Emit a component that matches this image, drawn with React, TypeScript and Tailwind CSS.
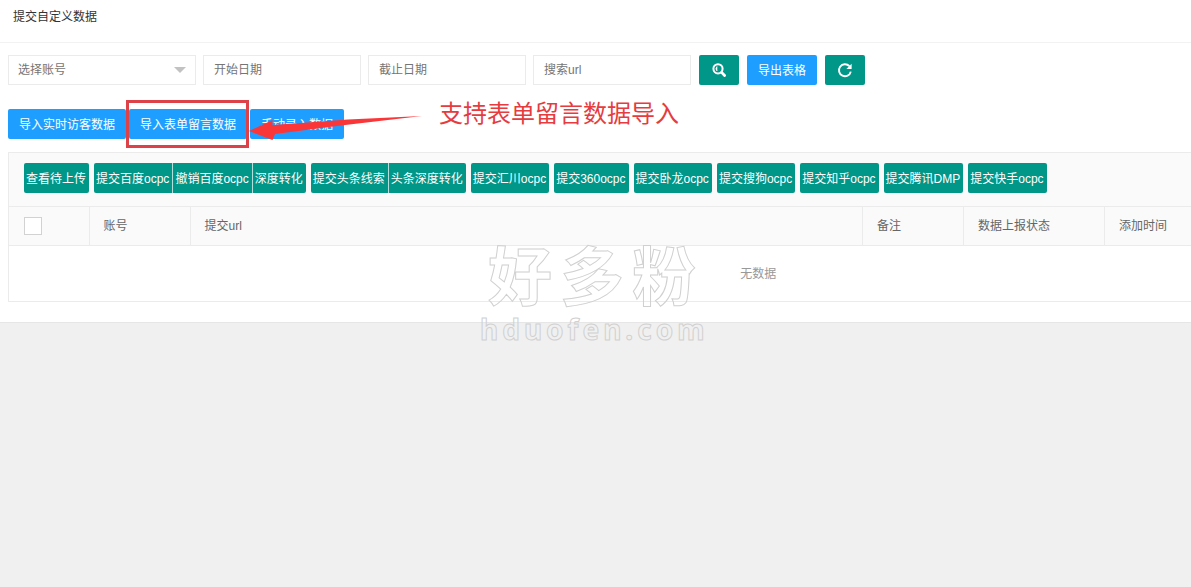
import React, { useState } from 'react';

interface ButtonGroup {
  items: string[];
}

const groups: ButtonGroup[] = [
  { items: ['查看待上传'] },
  { items: ['提交百度ocpc', '撤销百度ocpc', '深度转化'] },
  { items: ['提交头条线索', '头条深度转化'] },
  { items: ['提交汇川ocpc'] },
  { items: ['提交360ocpc'] },
  { items: ['提交卧龙ocpc'] },
  { items: ['提交搜狗ocpc'] },
  { items: ['提交知乎ocpc'] },
  { items: ['提交腾讯DMP'] },
  { items: ['提交快手ocpc'] },
];

const columns = [
  { title: '账号', width: 'w-[101px]' },
  { title: '提交url', width: '' },
  { title: '备注', width: 'w-[101px]' },
  { title: '数据上报状态', width: 'w-[141px]' },
  { title: '添加时间', width: 'w-[403px]' },
];

const inputClass = 'h-[30px] w-[158px] border border-[#ebebeb] bg-white px-[10px] text-xs placeholder:text-[#757575] focus:outline-none';
const blueBtn = 'h-[30px] rounded-xs bg-[#1e9fff] px-[11px] pt-[2px] text-xs whitespace-nowrap text-white hover:opacity-80';
const iconBtn = 'flex h-[30px] w-10 items-center justify-center rounded-xs bg-[#009688] text-white hover:opacity-80';

const SearchIcon = () => (
  <svg width="14" height="14" viewBox="0 0 14 14" fill="none" stroke="currentColor">
    <circle cx="6" cy="5.8" r="4.6" strokeWidth="2" />
    <path d="M5 3.6A3 3 0 0 0 5 8z" fill="currentColor" strokeWidth="0.6" />
    <path d="M9.6 9.4l3 3.1" strokeWidth="2.8" strokeLinecap="round" />
  </svg>
);

const RefreshIcon = () => (
  <svg width="16" height="16" viewBox="0 0 16 16" fill="none" stroke="currentColor" strokeWidth="1.9">
    <path d="M13.8 9.6A6 6 0 1 1 12.4 4.2" />
    <path d="M14.6 1.8v5.2H9.4z" fill="currentColor" stroke="none" />
  </svg>
);

const App: React.FC = () => {
  const [account, setAccount] = useState('');
  const [start, setStart] = useState('');
  const [end, setEnd] = useState('');
  const [url, setUrl] = useState('');
  const [checked, setChecked] = useState(false);

  return (
    <div className="min-h-screen overflow-hidden bg-[#f0f0f0] font-['Liberation_Sans','Noto_Sans_CJK_SC',sans-serif] text-xs text-[#666]">
      <div className="relative border-b border-[#e6e6e6] bg-white pb-5">
        <h1 className="h-[43px] border-b border-[#f2f2f2] px-[13px] text-xs leading-[34px] text-[#333]">提交自定义数据</h1>

        <div className="flex flex-wrap gap-2 px-2 pt-3">
          <div className="flex gap-[7px]">
            <div className="relative">
              <select
                aria-label="选择账号"
                value={account}
                onChange={(e) => setAccount(e.target.value)}
                className="h-[30px] w-[188px] appearance-none border border-[#ebebeb] bg-white px-[9px] text-xs text-[#757575] focus:outline-none"
              >
                <option value="">选择账号</option>
              </select>
              <span className="pointer-events-none absolute top-3 right-[10px] border-x-6 border-t-6 border-x-transparent border-t-[#c2c2c2]" />
            </div>
            <input aria-label="开始日期" placeholder="开始日期" value={start} onChange={(e) => setStart(e.target.value)} className={inputClass} />
            <input aria-label="截止日期" placeholder="截止日期" value={end} onChange={(e) => setEnd(e.target.value)} className={inputClass} />
            <input aria-label="搜索url" placeholder="搜索url" value={url} onChange={(e) => setUrl(e.target.value)} className={inputClass} />
          </div>
          <button aria-label="搜索" className={iconBtn}><SearchIcon /></button>
          <button className={blueBtn}>导出表格</button>
          <button aria-label="刷新" className={iconBtn}><RefreshIcon /></button>
        </div>

        <div className="mt-6 flex gap-[3px] px-2">
          <button className={blueBtn}>导入实时访客数据</button>
          <div className="relative">
            <button className={blueBtn}>导入表单留言数据</button>
            <span className="pointer-events-none absolute -inset-y-[9px] -right-[2px] -left-[3px] border-3 border-[#dc4247]" />
            {/* callout arrow and its note */}
            <svg className="pointer-events-none absolute top-1 left-[119px] z-10" width="176" height="30" viewBox="0 0 176 30">
              <path d="M1 18L24.5 7V12L100 6.6L174 3L95 12.2L27 21L24.5 27Z" fill="#fb3638" />
            </svg>
            <p className="pointer-events-none absolute -top-[13px] left-[310px] text-2xl leading-9 whitespace-nowrap text-[#e63c3f]">支持表单留言数据导入</p>
          </div>
          <button className={blueBtn}>手动录入数据</button>
        </div>

        <div className="mt-[13px] ml-2 overflow-hidden border-y border-l border-[#ebebeb]">
          <div className="flex gap-[5px] bg-[#fafafa] pt-[10px] pr-4 pb-[13px] pl-[15px]">
            {groups.map((group) => (
              <div key={group.items[0]} className="flex divide-x divide-[#b2dfdb] overflow-hidden rounded-xs">
                {group.items.map((item) => (
                  <button key={item} className="h-[30px] bg-[#009688] pt-[2px] pr-[3px] pl-[2px] text-xs whitespace-nowrap text-white hover:opacity-80">
                    {item}
                  </button>
                ))}
              </div>
            ))}
          </div>

          <table className="w-[1499px] table-fixed border-collapse">
            <thead>
              <tr className="h-[39px] border-y border-[#ebebeb] bg-[#fafafa] text-left">
                <th className="w-[80px] border-r border-[#ebebeb] pl-[15px]">
                  <input
                    type="checkbox"
                    aria-label="全选"
                    checked={checked}
                    onChange={(e) => setChecked(e.target.checked)}
                    className="block size-[18px] appearance-none border border-[#d2d2d2] bg-white checked:bg-[#009688]"
                  />
                </th>
                {columns.map((col) => (
                  <th key={col.title} className={`${col.width} border-r border-[#ebebeb] pl-[14px] font-normal`}>{col.title}</th>
                ))}
              </tr>
            </thead>
            <tbody>
              <tr className="h-[55px]">
                <td colSpan={6} className="pt-[2px] text-center text-[#999]">无数据</td>
              </tr>
            </tbody>
          </table>
        </div>

        {/* watermark */}
        <div className="pointer-events-none absolute top-[237px] left-[480px] whitespace-nowrap text-transparent [-webkit-text-stroke:1px_#d0d0d0]">
          <p className="pl-2 text-[64px] leading-[82px] font-bold tracking-[8px]">好多粉</p>
          <p className="font-['Noto_Sans',sans-serif] text-[28px] leading-5 font-bold tracking-[4px]">hduofen.com</p>
        </div>
      </div>
    </div>
  );
};

export default App;
